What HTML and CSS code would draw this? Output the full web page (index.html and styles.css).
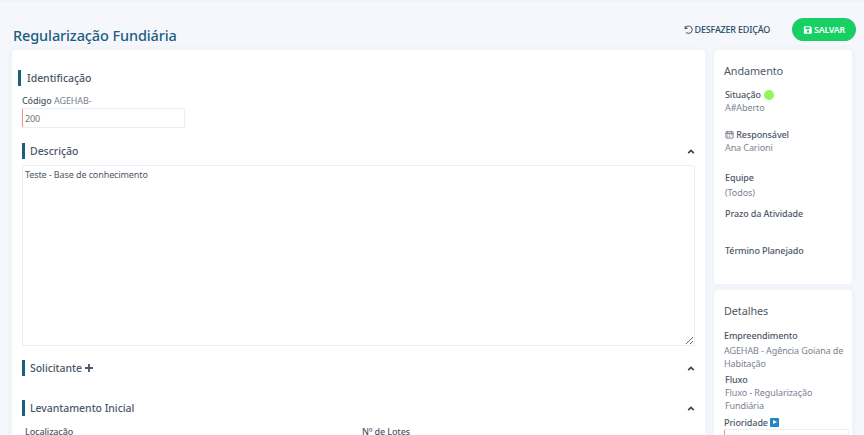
FILE: index.html
```html
<!DOCTYPE html>
<html lang="pt-BR">
<head>
  <meta charset="UTF-8" />
  <title>Regularização Fundiária</title>
  <link rel="stylesheet" href="styles.css">
</head>
<body>
  <header class="top">
    <h1>Regularização Fundiária</h1>
    <div class="actions">
      <button class="undo">
        <svg class="undo-icon" viewBox="0 0 12 12"><path d="M2.6 2.2 2.2 5l2.8-.2M2.4 4.8A4 4 0 1 1 6 10.2a4 4 0 0 1-2.8-1.1"/></svg>
        DESFAZER EDIÇÃO
      </button>
      <button class="save">
        <svg class="save-icon" viewBox="0 0 12 12"><path fill-rule="evenodd" d="M2 1.5h6.8l1.7 1.700V9.500a1 1 0 0 1-1 1H2a1 1 0 0 1-1-1v-7a1 1 0 0 1 1-1zm1 1.300v2.200h5V2.800zM6 6.300a1.500 1.500 0 1 0 0 3 1.500 1.500 0 0 0 0-3z"/></svg>
        SALVAR
      </button>
    </div>
  </header>

  <div class="layout">
    <main class="card main">
      <section class="ident">
        <h2 class="section-title">Identificação</h2>
        <div class="code-label"><b>Código</b> AGEHAB-</div>
        <input class="code-input" type="text" value="200">
      </section>

      <section class="section">
        <div class="section-head">
          <h2 class="section-title">Descrição</h2>
          <svg class="chevron" viewBox="0 0 10 6"><path d="M1.500 5 5 1.600 8.500 5"/></svg>
        </div>
        <textarea class="desc">Teste - Base de conhecimento</textarea>
      </section>

      <section class="section solicitante">
        <div class="section-head">
          <h2 class="section-title">Solicitante <svg class="plus" viewBox="0 0 10 10"><path d="M5 1v8M1 5h8"/></svg></h2>
          <svg class="chevron" viewBox="0 0 10 6"><path d="M1.500 5 5 1.600 8.500 5"/></svg>
        </div>
      </section>

      <section class="section levantamento">
        <div class="section-head">
          <h2 class="section-title">Levantamento Inicial</h2>
          <svg class="chevron" viewBox="0 0 10 6"><path d="M1.500 5 5 1.600 8.500 5"/></svg>
        </div>
        <div class="fields">
          <label>Localização</label>
          <label>Nº de Lotes</label>
        </div>
      </section>
    </main>

    <aside class="side">
      <div class="card side-card andamento">
        <h3>Andamento</h3>
        <div class="item situacao">
          <b>Situação <i class="dot"></i></b>
          <span>A#Aberto</span>
        </div>
        <div class="item responsavel">
          <b><svg class="cal" viewBox="0 0 10 10"><path d="M1.500 2h7a.5.5 0 0 1 .5.5v6a.5.5 0 0 1-.5.5h-7a.5.5 0 0 1-.5-.5v-6a.5.5 0 0 1 .5-.5zM1 4h8M3 1v2M7 1v2M2.500 5.500h1M4.500 5.500h1M6.500 5.500h1M2.500 7.300h1M4.500 7.300h1"/></svg> Responsável</b>
          <span>Ana Carioni</span>
        </div>
        <div class="item equipe">
          <b>Equipe</b>
          <span>(Todos)</span>
        </div>
        <div class="item prazo"><b>Prazo da Atividade</b></div>
        <div class="item termino"><b>Término Planejado</b></div>
      </div>

      <div class="card side-card detalhes">
        <h3>Detalhes</h3>
        <div class="item">
          <b>Empreendimento</b>
          <span class="long">AGEHAB - Agência Goiana de Habitação</span>
        </div>
        <div class="item fluxo">
          <b>Fluxo</b>
          <span>Fluxo - Regularização Fundiária</span>
        </div>
        <div class="item prioridade">
          <b>Prioridade <i class="play"></i></b>
          <div class="select"></div>
        </div>
      </div>
    </aside>
  </div>
</body>
</html>
```

FILE: styles.css
```css
* {
  box-sizing: border-box;
}
html, body {
  height: 435px;
  overflow: hidden;
}
body {
  margin: 0;
  background: #f5f7fd;
  font-family: 'Noto Sans', 'Open Sans', sans-serif;
  color: #6c757d;
  font-size: 9px;
  letter-spacing: -0.1px;
  border-top: 2px solid #f2f3f7;
}
button {
  font-family: inherit;
  border: none;
  background: none;
  cursor: pointer;
}

/* Header */
.top {
  display: flex;
  justify-content: space-between;
  align-items: flex-start;
  height: 48px;
  padding: 16px 8px 0 13px;
}
.top h1 {
  margin: 7px 0 0;
  font-size: 14.500px;
  line-height: 20px;
  font-weight: 500;
  letter-spacing: -0.12px;
  color: #1b5e80;
}
.actions {
  display: flex;
  align-items: center;
  gap: 22px;
}
.undo {
  display: flex;
  align-items: center;
  gap: 1px;
  padding: 0;
  font-size: 9px;
  font-weight: 500;
  letter-spacing: -0.2px;
  color: #1f4a63;
}
.undo-icon {
  width: 11px;
  height: 11px;
  fill: none;
  stroke: #1f4a63;
  stroke-width: 1;
}
.save {
  display: flex;
  align-items: center;
  gap: 1px;
  height: 23px;
  padding: 0 11px;
  border-radius: 12px;
  background: #18cf63;
  color: #fff;
  font-size: 8.800px;
  font-weight: 600;
  letter-spacing: -0.2px;
}
.save-icon {
  width: 10px;
  height: 10px;
  fill: #fff;
}

/* Layout */
.layout {
  display: flex;
  gap: 9px;
  padding: 0 12px;
  align-items: flex-start;
}
.card {
  background: #fff;
  border-radius: 4px;
  box-shadow: 0 0 6px rgba(90, 100, 140, 0.06);
}
.main {
  width: 693px;
  height: 500px;
  padding: 20px 10px 0 6px;
}
.side {
  width: 138px;
  display: flex;
  flex-direction: column;
  gap: 6px;
}

/* Sections */
.section-title {
  margin: 0;
  font-size: 10.500px;
  font-weight: 500;
  letter-spacing: -0.05px;
  color: #4d5767;
  border-left: 3px solid #1b5e80;
  padding-left: 5px;
  line-height: 16px;
  display: flex;
  align-items: center;
  gap: 2px;
}
.ident .section-title {
  padding-left: 6px;
}
.code-label {
  margin: 8px 0 0 4px;
  line-height: 13px;
  color: #7a8390;
}
.code-label b {
  font-weight: 500;
  color: #4d5767;
}
.code-input {
  display: block;
  width: 163px;
  height: 20px;
  margin: 1px 0 0 4px;
  padding: 0 2px;
  font: inherit;
  letter-spacing: inherit;
  color: #6c757d;
  border: 1px solid #eceef2;
  border-left: 1px solid #f58b84;
  border-radius: 2px;
  outline: none;
}
.section {
  margin: 15px 0 0 4px;
}
.section-head {
  display: flex;
  justify-content: space-between;
  align-items: center;
}
.chevron {
  width: 8px;
  height: 5px;
  fill: none;
  stroke: #39434f;
  stroke-width: 2;
}
.plus {
  width: 10px;
  height: 10px;
  fill: none;
  stroke: #4d5767;
  stroke-width: 1.900;
}
.desc {
  display: block;
  width: 673px;
  height: 181px;
  margin-top: 6px;
  padding: 2px;
  font: inherit;
  letter-spacing: inherit;
  color: #4d5767;
  border: 1px solid #eceef2;
  border-radius: 2px;
  outline: none;
}
.solicitante {
  margin-top: 14px;
}
.levantamento {
  margin-top: 24px;
}
.fields {
  display: grid;
  grid-template-columns: 337px 1fr;
  margin: 9px 0 0 3px;
}
.fields label {
  font-weight: 500;
  color: #4d5767;
}

/* Side cards */
.side-card {
  padding: 13px 8px 0 10px;
}
.side-card h3 {
  margin: 0;
  font-size: 10.800px;
  font-weight: 400;
  letter-spacing: -0.05px;
  color: #4d5767;
  line-height: 16px;
}
.item b {
  display: block;
  font-weight: 500;
  color: #4d5767;
  line-height: 13px;
}
.item span {
  display: block;
  line-height: 13px;
  color: #7a8390;
}
.andamento {
  height: 234px;
}
.andamento .item {
  padding-left: 1px;
}
.situacao {
  margin-top: 9px;
}
.dot {
  display: inline-block;
  width: 10px;
  height: 10px;
  border-radius: 50%;
  background: #92f55d;
  vertical-align: -2px;
  margin-left: 1px;
}
.responsavel {
  margin-top: 14px;
}
.cal {
  width: 9px;
  height: 9px;
  fill: none;
  stroke: #4d5767;
  stroke-width: 0.800;
  vertical-align: -1px;
}
.equipe {
  margin-top: 17px;
}
.equipe span {
  margin-top: 2px;
}
.prazo {
  margin-top: 8px;
}
.termino {
  margin-top: 24px;
}
.detalhes {
  height: 200px;
}
.detalhes .item:first-of-type {
  margin-top: 10px;
}
.long {
  margin-top: 2px;
}
.fluxo {
  margin-top: 4px;
  padding-left: 1px;
}
.fluxo b {
  line-height: 12px;
}
.prioridade {
  margin-top: 4px;
}
.play {
  display: inline-block;
  width: 9px;
  height: 9px;
  border-radius: 1px;
  background: #1f88c2;
  vertical-align: -1px;
  position: relative;
}
.play::after {
  content: "";
  position: absolute;
  top: 2px;
  left: 3px;
  border-left: 4px solid #fff;
  border-top: 2.500px solid transparent;
  border-bottom: 2.500px solid transparent;
}
.select {
  height: 20px;
  margin-right: -5px;
  border: 1px solid #eceef2;
  border-left: 1px solid #f58b84;
  border-radius: 2px;
}
```
